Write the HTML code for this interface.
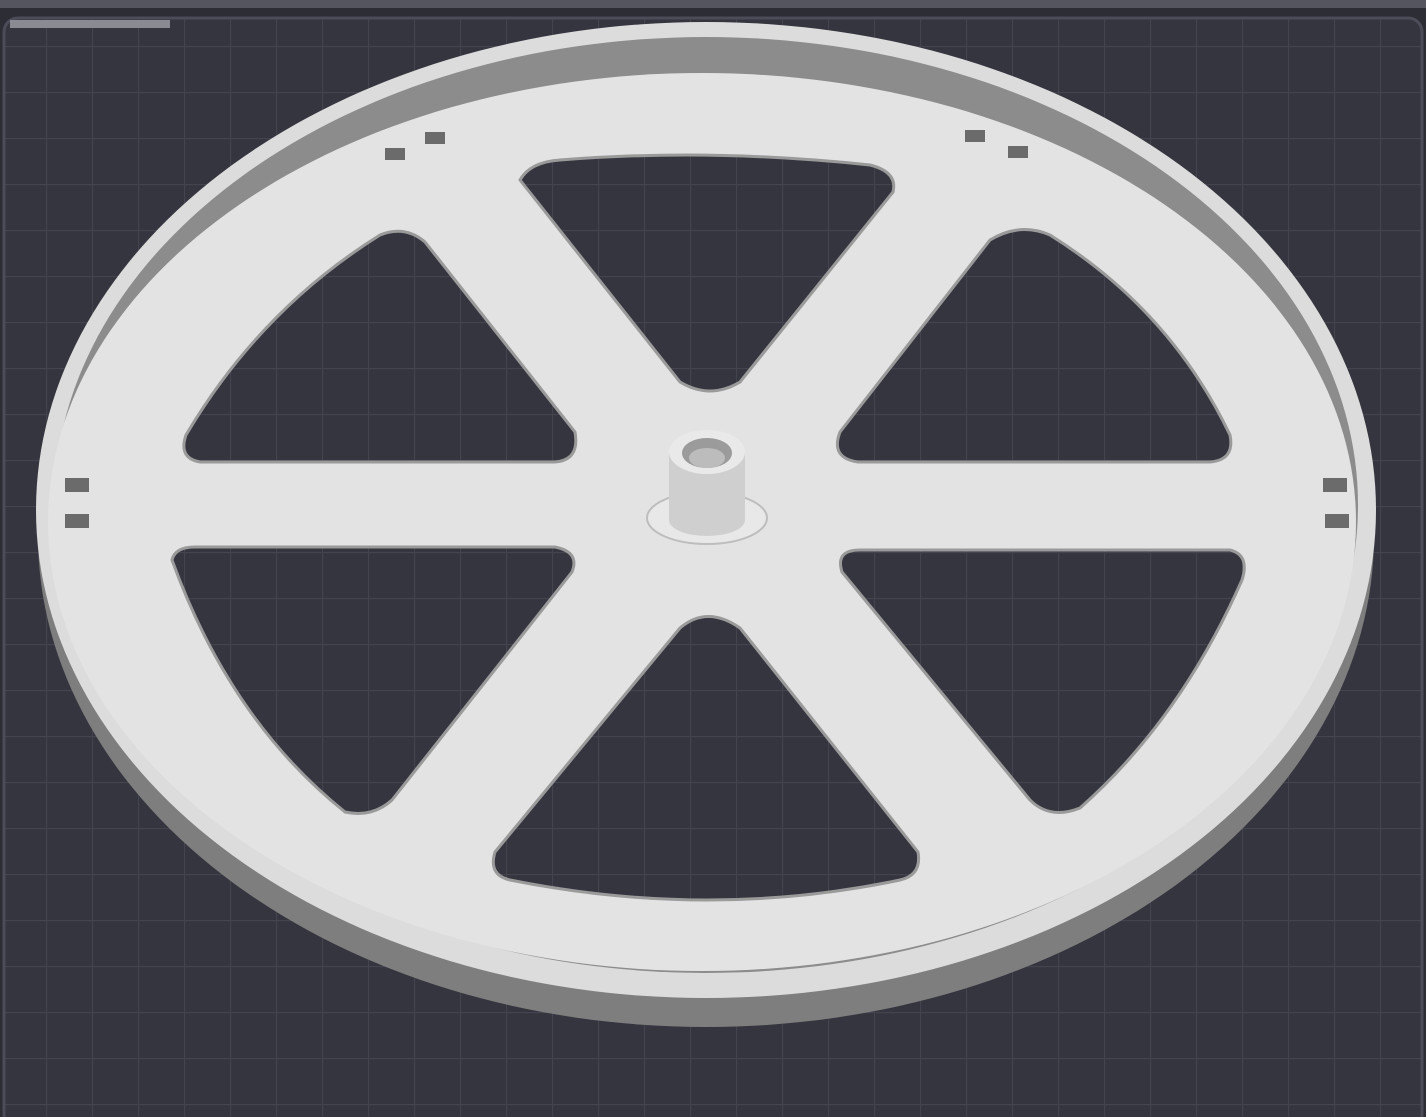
<!DOCTYPE html>
<html><head><meta charset="utf-8"><style>
html,body{margin:0;padding:0;background:#2e2e36;}
svg{display:block;}
</style></head><body>
<svg width="1426" height="1117" viewBox="0 0 1426 1117" xmlns="http://www.w3.org/2000/svg">
<defs>
<pattern id="g" x="0" y="0" width="46" height="46" patternUnits="userSpaceOnUse">
<rect width="46" height="46" fill="#35353f"/>
<path d="M0 0.5H46M0.5 0V46" stroke="#44444f" stroke-width="1.2"/>
</pattern>
</defs>
<rect width="1426" height="1117" fill="#2d2d35"/>
<rect x="0" y="0" width="1426" height="8" fill="#55555f"/>
<rect x="4" y="18" width="1418" height="1110" rx="14" fill="url(#g)" stroke="#4c4c58" stroke-width="3"/>
<rect x="10" y="20" width="160" height="8" fill="#8a8a92"/>
<ellipse cx="706" cy="536" rx="668" ry="491" fill="#7e7e7e"/>
<ellipse cx="706" cy="510" rx="670" ry="488" fill="#dcdcdc"/>
<ellipse cx="706" cy="505" rx="652" ry="468" fill="#8c8c8c"/>
<ellipse cx="702" cy="522" rx="654" ry="449" fill="#e3e3e3"/>
<g fill="url(#g)" stroke="#9a9a9a" stroke-width="3" stroke-linejoin="round">
<path d="M520 180 Q530 162 560 160 Q710 148 870 165 Q898 172 893 192 L740 382 Q710 400 680 382 Z"/>
<path d="M380 235 Q405 225 425 242 L575 432 Q580 460 555 462 L200 462 Q178 458 186 435 Q260 310 380 235 Z"/>
<path d="M990 240 Q1020 222 1050 235 Q1170 310 1230 435 Q1235 460 1210 462 L858 462 Q830 458 840 432 Z"/>
<path d="M172 560 Q175 547 195 547 L555 547 Q580 552 572 572 L392 800 Q372 818 345 812 Q230 720 172 560 Z"/>
<path d="M842 572 Q835 550 860 550 L1230 550 Q1250 555 1242 580 Q1180 720 1080 808 Q1050 820 1030 800 Z"/>
<path d="M680 628 Q707 605 740 628 L918 852 Q922 875 900 880 Q710 920 510 880 Q488 875 495 852 Z"/>
</g>
<ellipse cx="707" cy="518" rx="60" ry="26" fill="#e8e8e8" stroke="#bdbdbd" stroke-width="2"/>
<rect x="669" y="452" width="76" height="68" fill="#cfcfcf"/>
<ellipse cx="707" cy="520" rx="38" ry="16" fill="#cfcfcf"/>
<ellipse cx="707" cy="452" rx="38" ry="22" fill="#e9e9e9"/>
<ellipse cx="707" cy="453" rx="25" ry="15" fill="#9b9b9b"/>
<ellipse cx="707" cy="458" rx="18" ry="10" fill="#bcbcbc"/>
<g fill="#6b6b6b">
<rect x="385" y="148" width="20" height="12"/><rect x="425" y="132" width="20" height="12"/>
<rect x="965" y="130" width="20" height="12"/><rect x="1008" y="146" width="20" height="12"/>
<rect x="65" y="478" width="24" height="14"/><rect x="65" y="514" width="24" height="14"/>
<rect x="1323" y="478" width="24" height="14"/><rect x="1325" y="514" width="24" height="14"/>
</g>
</svg>
</body></html>
